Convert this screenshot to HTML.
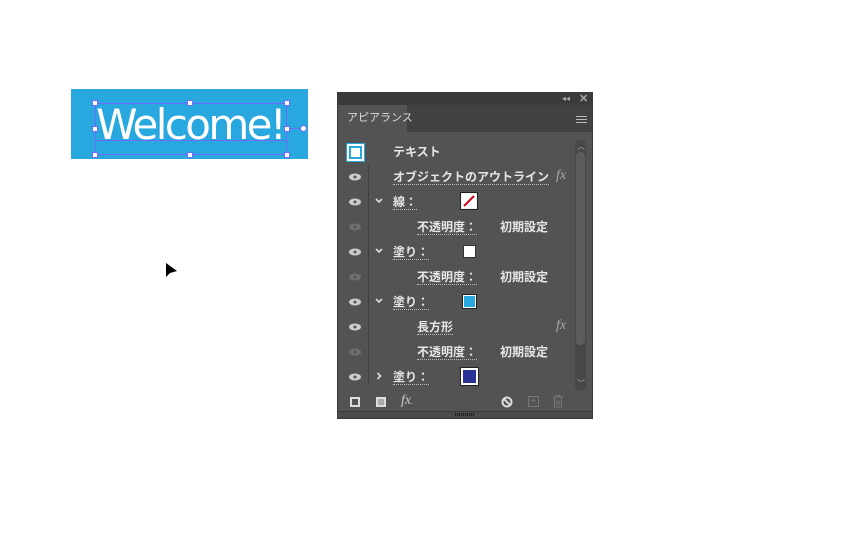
<!DOCTYPE html>
<html><head><meta charset="utf-8"><style>
*{margin:0;padding:0;box-sizing:border-box}
body{width:841px;height:539px;background:#fff;position:relative;overflow:hidden;font-family:"Liberation Sans","Noto Sans CJK JP",sans-serif}
.a{position:absolute}
.t{position:absolute;color:#e6e6e6;font-size:12px;line-height:14px;font-weight:bold;white-space:nowrap}
.u{border-bottom:1px dotted #bbb}
.h{position:absolute;width:6px;height:6px;background:#fff;border:1px solid #6b6bff}
</style></head><body>
<div class="a" style="left:71px;top:89px;width:237px;height:70px;background:#29a8e0"></div>
<div class="a" style="left:96px;top:97px;font-family:'DejaVu Sans',sans-serif;font-size:42px;color:#fff;line-height:56px;letter-spacing:-2.6px">Welcome!</div>
<div class="a" style="left:95px;top:103px;width:192px;height:52px;border:1px solid #6b6bff"></div>
<div class="a" style="left:95px;top:140px;width:192px;height:1px;background:#6b6bff"></div>
<div class="a" style="left:287px;top:128px;width:13px;height:1px;background:#6b6bff"></div>
<div class="a" style="left:300px;top:125px;width:7px;height:7px;border-radius:50%;background:#fff;border:1px solid #6b6bff"></div>
<div class="h" style="left:92px;top:100px"></div><div class="h" style="left:187px;top:100px"></div><div class="h" style="left:284px;top:100px"></div>
<div class="h" style="left:92px;top:126px"></div><div class="h" style="left:284px;top:126px"></div>
<div class="h" style="left:92px;top:152px"></div><div class="h" style="left:187px;top:152px"></div><div class="h" style="left:284px;top:152px"></div>
<svg class="a" style="left:165px;top:262px" width="14" height="18"><path d="M1 1 L1 15 L5 11 L12 9 Z" fill="#000"/></svg>

<div class="a" style="left:337px;top:92px;width:256px;height:327px;background:#535353;border:1px solid #3a3a3a"></div>
<div class="a" style="left:338px;top:93px;width:254px;height:12px;background:#3b3b3b"></div>
<div class="a" style="left:338px;top:105px;width:254px;height:27px;background:#424242"></div>
<div class="a" style="left:338px;top:105px;width:69px;height:28px;background:#535353"></div>
<div class="t" style="left:347px;top:111px;font-weight:normal;font-size:11px;color:#ddd">アピアランス</div>
<div class="a" style="left:562px;top:94px;color:#aaa;font-size:8px;line-height:10px">◂◂</div>
<div class="a" style="left:579px;top:93px;color:#aaa;font-size:11px;line-height:12px;font-weight:bold">✕</div>
<div class="a" style="left:576px;top:116px;width:11px;height:1px;background:#bbb;box-shadow:0 3px 0 #bbb,0 6px 0 #bbb"></div>

<div class="a" style="left:347px;top:144px;width:17px;height:17px;border:2px solid #fff;outline:1px solid #29a8e0;background:#fff"></div>
<div class="a" style="left:349px;top:146px;width:13px;height:13px;border:2px solid #29a8e0;background:#fff"></div>
<div class="a" style="left:368px;top:165px;width:1px;height:220px;background:#3f3f3f"></div>
<div class="a" style="left:575px;top:140px;width:11px;height:251px;background:#474747;border-radius:5px"></div>
<div class="a" style="left:576px;top:152px;width:9px;height:193px;background:#5c5c5c;border-radius:4px"></div>
<div class="a" style="left:577px;top:141px;color:#aaa;font-size:8px">︿</div>
<div class="a" style="left:577px;top:378px;color:#aaa;font-size:8px">﹀</div>

<div class="t" style="left:393px;top:145px">テキスト</div>
<div class="t u" style="left:393px;top:170px">オブジェクトのアウトライン</div>
<div class="t" style="left:556px;top:169px;font-style:italic;font-weight:normal;color:#aaa;font-family:'Liberation Serif',serif;font-size:14px">fx</div>
<div class="t u" style="left:393px;top:195px">線：</div>
<div class="a" style="left:461px;top:193px;width:16px;height:16px;border:1px solid #eee;background:#fff;outline:1px solid #222"><svg width="14" height="14" style="display:block"><path d="M2 12 L12 2" stroke="#d0021b" stroke-width="2"/></svg></div>
<div class="t u" style="left:417px;top:220px">不透明度：</div><div class="t" style="left:500px;top:220px">初期設定</div>
<div class="t u" style="left:393px;top:245px">塗り：</div>
<div class="a" style="left:463px;top:245px;width:13px;height:13px;background:#fff;border:1px solid #333"></div>
<div class="t u" style="left:417px;top:270px">不透明度：</div><div class="t" style="left:500px;top:270px">初期設定</div>
<div class="t u" style="left:393px;top:295px">塗り：</div>
<div class="a" style="left:463px;top:295px;width:13px;height:13px;background:#29a8e0;border:1px solid #fff;outline:1px solid #222"></div>
<div class="t u" style="left:417px;top:320px">長方形</div>
<div class="t" style="left:556px;top:319px;font-style:italic;font-weight:normal;color:#aaa;font-family:'Liberation Serif',serif;font-size:14px">fx</div>
<div class="t u" style="left:417px;top:345px">不透明度：</div><div class="t" style="left:500px;top:345px">初期設定</div>
<div class="t u" style="left:393px;top:370px">塗り：</div>
<div class="a" style="left:461px;top:368px;width:17px;height:17px;background:#2b3296;border:2px solid #fff;outline:1px solid #222"></div>

<svg class="a" style="left:374px;top:195px" width="10" height="190" fill="none" stroke="#ddd" stroke-width="1.6">
<path d="M2 4 L5 7 L8 4"/><path d="M2 54 L5 57 L8 54"/><path d="M2 104 L5 107 L8 104"/><path d="M3.5 178 L6.5 181 L3.5 184"/>
</svg>

<svg class="a" style="left:348px;top:170px" width="14" height="215">
<g>
<ellipse cx="7" cy="7" rx="6" ry="3.5" fill="#ccc"/><circle cx="7" cy="7" r="1.5" fill="#535353"/>
<ellipse cx="7" cy="32" rx="6" ry="3.5" fill="#ccc"/><circle cx="7" cy="32" r="1.5" fill="#535353"/>
<ellipse cx="7" cy="57" rx="6" ry="3.5" fill="#6e6e6e"/><circle cx="7" cy="57" r="1.5" fill="#535353"/>
<ellipse cx="7" cy="82" rx="6" ry="3.5" fill="#ccc"/><circle cx="7" cy="82" r="1.5" fill="#535353"/>
<ellipse cx="7" cy="107" rx="6" ry="3.5" fill="#6e6e6e"/><circle cx="7" cy="107" r="1.5" fill="#535353"/>
<ellipse cx="7" cy="132" rx="6" ry="3.5" fill="#ccc"/><circle cx="7" cy="132" r="1.5" fill="#535353"/>
<ellipse cx="7" cy="157" rx="6" ry="3.5" fill="#ccc"/><circle cx="7" cy="157" r="1.5" fill="#535353"/>
<ellipse cx="7" cy="182" rx="6" ry="3.5" fill="#6e6e6e"/><circle cx="7" cy="182" r="1.5" fill="#535353"/>
<ellipse cx="7" cy="207" rx="6" ry="3.5" fill="#ccc"/><circle cx="7" cy="207" r="1.5" fill="#535353"/>
</g></svg>

<div class="a" style="left:350px;top:397px;width:10px;height:10px;border:2px solid #ddd"></div>
<div class="a" style="left:376px;top:397px;width:10px;height:10px;border:2px solid #ddd;background:#aaa"></div>
<div class="a" style="left:401px;top:393px;color:#ccc;font-style:italic;font-family:'Liberation Serif',serif;font-size:14px">fx<span style="font-size:8px">.</span></div>
<svg class="a" style="left:501px;top:396px" width="12" height="12"><circle cx="6" cy="6" r="4.5" fill="none" stroke="#ddd" stroke-width="2"/><path d="M3 3 L9 9" stroke="#ddd" stroke-width="2"/></svg>
<div class="a" style="left:528px;top:396px;width:11px;height:11px;border:1px solid #777;color:#777;font-size:10px;line-height:9px;text-align:center">+</div>
<svg class="a" style="left:552px;top:395px" width="12" height="13"><path d="M1 2 H11 M4 2 V0.5 H8 V2 M2.5 3 V12 H9.5 V3 M5 5 V10 M7 5 V10" fill="none" stroke="#777"/></svg>
<div class="a" style="left:338px;top:411px;width:254px;height:1px;background:#3a3a3a"></div>
<div class="a" style="left:338px;top:412px;width:254px;height:6px;background:#4a4a4a"></div>
<div class="a" style="left:455px;top:413px;width:20px;height:3px;background:repeating-linear-gradient(90deg,#222 0 1px,transparent 1px 2px)"></div>
</body></html>
